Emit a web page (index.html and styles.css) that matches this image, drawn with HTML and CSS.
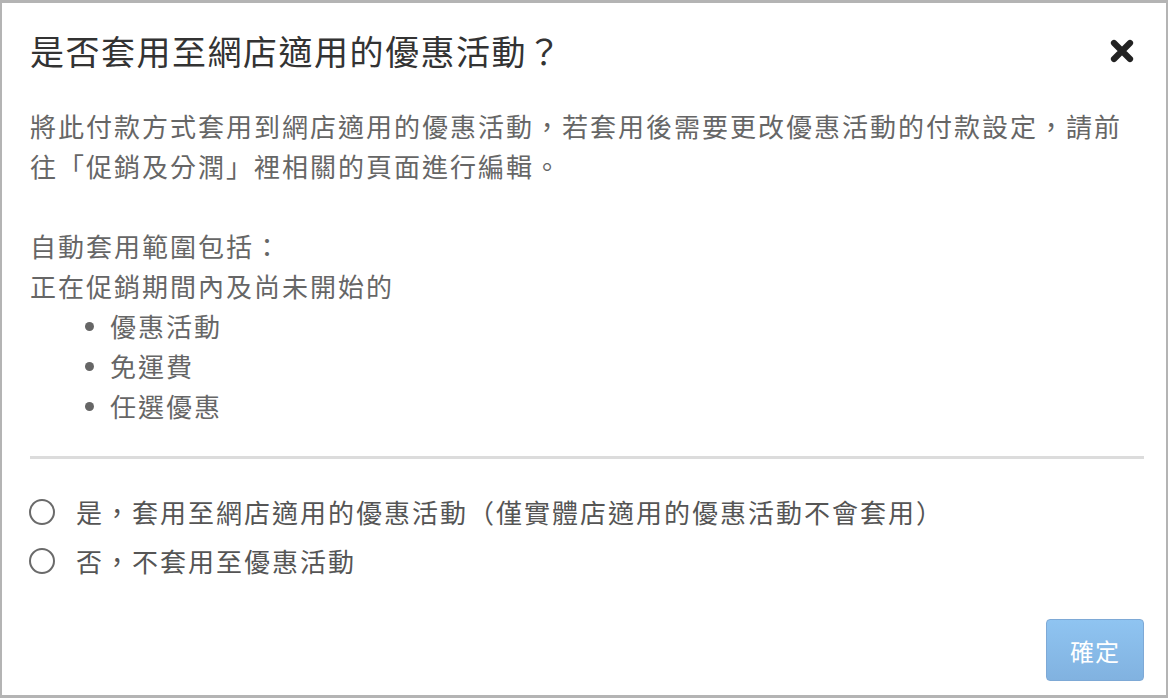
FILE: index.html
```html
<!DOCTYPE html>
<html lang="zh-Hant">
<head>
<meta charset="utf-8">
<title>是否套用至網店適用的優惠活動？</title>
<link rel="stylesheet" href="styles.css">
</head>
<body>
<div class="dialog">
  <div class="dialog-header">
    <h1 class="dialog-title">是否套用至網店適用的優惠活動？</h1>
    <button class="close-btn" type="button" aria-label="關閉">
      <svg width="24" height="24" viewBox="0 0 24 24">
        <path d="M4 4 L20 20 M20 4 L4 20" stroke="#222" stroke-width="6.2" stroke-linecap="round" fill="none"/>
      </svg>
    </button>
  </div>
  <div class="dialog-body">
    <p class="desc">將此付款方式套用到網店適用的優惠活動，若套用後需要更改優惠活動的付款設定，請前往「促銷及分潤」裡相關的頁面進行編輯。</p>
    <p class="scope">自動套用範圍包括：<br>正在促銷期間內及尚未開始的</p>
    <ul class="scope-list">
      <li>優惠活動</li>
      <li>免運費</li>
      <li>任選優惠</li>
    </ul>
    <hr class="divider">
    <div class="options">
      <label class="option"><span class="radio"></span><span>是，套用至網店適用的優惠活動（僅實體店適用的優惠活動不會套用）</span></label>
      <label class="option"><span class="radio"></span><span>否，不套用至優惠活動</span></label>
    </div>
  </div>
  <div class="dialog-footer">
    <button class="confirm-btn" type="button">確定</button>
  </div>
</div>
</body>
</html>
```

FILE: styles.css
```css
html, body {
  margin: 0;
  padding: 0;
  background: #fff;
}

body {
  font-family: "Noto Sans CJK TC", "Noto Sans CJK SC", "Liberation Sans", sans-serif;
}

.dialog {
  box-sizing: border-box;
  width: 1168px;
  height: 698px;
  border-style: solid;
  border-color: #b4b4b4;
  border-width: 3px 2px 3px 2px;
  display: flex;
  flex-direction: column;
  padding: 0 22px 0 28px;
}

.dialog-header {
  display: flex;
  justify-content: space-between;
  align-items: center;
  padding-top: 28px;
  padding-bottom: 35px;
}

.dialog-title {
  margin: 0;
  font-size: 34px;
  font-weight: 400;
  line-height: 40px;
  color: #333;
  letter-spacing: 1.5px;
}

.close-btn {
  border: 0;
  background: none;
  padding: 0;
  margin-right: 10px;
  width: 24px;
  height: 24px;
  display: block;
  cursor: pointer;
}

.close-btn svg {
  display: block;
}

.dialog-body {
  color: #666;
  font-size: 26px;
  line-height: 40px;
  letter-spacing: 2px;
}

.desc {
  margin: 0 0 40px 0;
  padding-right: 10px;
}

.scope {
  margin: 0;
}

.scope-list {
  margin: 0;
  padding-left: 80px;
  list-style: none;
}

.scope-list li {
  position: relative;
}

.scope-list li::before {
  content: "";
  position: absolute;
  left: -25px;
  top: 16px;
  width: 9px;
  height: 9px;
  border-radius: 50%;
  background: #666;
}

.divider {
  border: 0;
  height: 3px;
  background: #dcdcdc;
  margin: 30px 0 33px 0;
}

.options {
  display: flex;
  flex-direction: column;
  gap: 9px;
}

.option {
  display: flex;
  align-items: center;
  gap: 21px;
  color: #555;
  cursor: pointer;
}

.radio {
  box-sizing: border-box;
  width: 26px;
  height: 26px;
  border: 2px solid #6a6a6a;
  border-radius: 50%;
  flex: none;
  margin-left: -1px;
}

.dialog-footer {
  margin-top: auto;
  display: flex;
  justify-content: flex-end;
  padding-bottom: 14px;
}

.confirm-btn {
  box-sizing: border-box;
  width: 98px;
  height: 62px;
  border: 1px solid #7ea9d6;
  border-radius: 4px;
  background: linear-gradient(#8fc4f1, #81b2e0);
  color: #fff;
  font-family: inherit;
  font-size: 24px;
  letter-spacing: 1px;
  cursor: pointer;
}
```
